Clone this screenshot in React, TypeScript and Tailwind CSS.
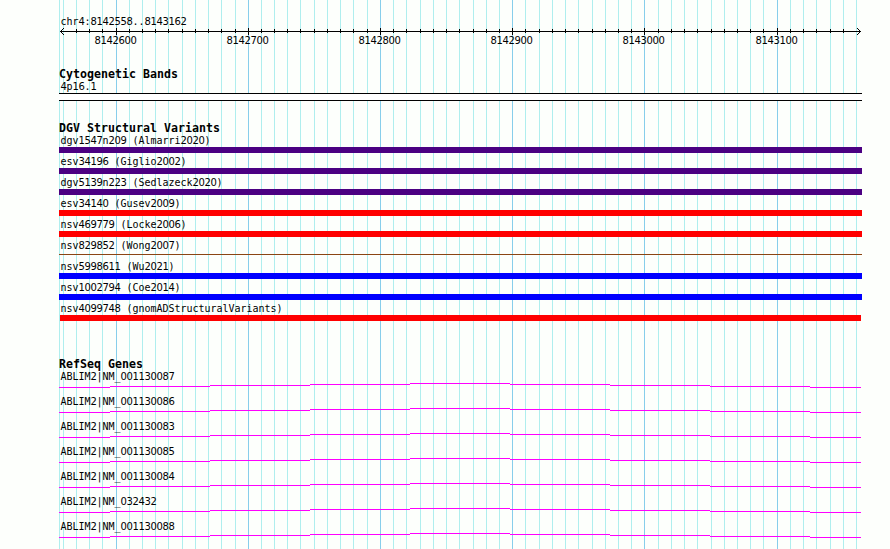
import React from "react";

const minor = [
  59, 63, 76, 89, 102, 129, 142, 155, 168, 182, 195, 208, 221, 235, 261, 274, 287, 300, 314, 327, 340, 353, 367,
  393, 406, 420, 433, 446, 459, 473, 486, 499, 525, 539, 552, 565, 578, 592, 605, 618, 631, 658, 671, 684, 697,
  711, 724, 737, 750, 763, 790, 803, 816, 830, 843, 856,
];

const major = [
  { x: 116, label: "8142600" },
  { x: 248, label: "8142700" },
  { x: 380, label: "8142800" },
  { x: 512, label: "8142900" },
  { x: 644, label: "8143000" },
  { x: 777, label: "8143100" },
];

const variants = [
  { name: "dgv1547n209 (Almarri2020)", bar: "h-1.5 bg-[#4b0082]" },
  { name: "esv34196 (Giglio2002)", bar: "h-1.5 bg-[#4b0082]" },
  { name: "dgv5139n223 (Sedlazeck2020)", bar: "h-1.5 bg-[#4b0082]" },
  { name: "esv34140 (Gusev2009)", bar: "h-1.5 bg-[#ff0000]" },
  { name: "nsv469779 (Locke2006)", bar: "h-1.5 bg-[#ff0000]" },
  { name: "nsv829852 (Wong2007)", bar: "mt-0.5 mb-[3px] h-px bg-[#8b4513]" },
  { name: "nsv5998611 (Wu2021)", bar: "h-1.5 bg-[#0000ff]" },
  { name: "nsv1002794 (Coe2014)", bar: "h-1.5 bg-[#0000ff]" },
  { name: "nsv4099748 (gnomADStructuralVariants)", bar: "mx-px h-1.5 bg-[#ff0000]" },
];

const genes = [
  "ABLIM2|NM_001130087",
  "ABLIM2|NM_001130086",
  "ABLIM2|NM_001130083",
  "ABLIM2|NM_001130085",
  "ABLIM2|NM_001130084",
  "ABLIM2|NM_032432",
  "ABLIM2|NM_001130088",
];

const digits = "font-['DejaVu_Sans',sans-serif] tracking-[-0.362px]";

// Fixed-pitch label whose digits use plain, undotted zeros.
function Label({ text }: { text: string }) {
  return (
    <div className="h-3 whitespace-pre pl-[1.5px] font-['DejaVu_Sans_Mono',monospace] text-[10px] leading-[14px] tracking-[-0.02px] text-black">
      {text.split(/(\d+)/).map((part, i) =>
        /^\d/.test(part) ? (
          <span key={i} className={digits}>
            {part}
          </span>
        ) : (
          part
        ),
      )}
    </div>
  );
}

function Title({ children }: { children: string }) {
  return (
    <h2 className="h-3 whitespace-pre font-['DejaVu_Sans_Mono',monospace] text-[11.6px] font-bold leading-[13px] tracking-[0.016px] text-black">
      {children}
    </h2>
  );
}

function Grid() {
  return (
    <svg className="absolute inset-0" width="890" height="549" shapeRendering="crispEdges">
      {minor.map((x) => (
        <rect key={x} x={x} y="0" width="1" height="549" fill="#afeeee" />
      ))}
      {major.map(({ x }) => (
        <rect key={x} x={x} y="0" width="1" height="549" fill="#87ceeb" />
      ))}
    </svg>
  );
}

function Ruler() {
  return (
    <svg className="block" width="803" height="20" viewBox="59 27 803 20">
      <g shapeRendering="crispEdges">
        <rect x="60" y="31" width="801" height="1" />
        {minor.slice(2, -1).map((x) => (
          <rect key={x} x={x} y="29" width="1" height="4" />
        ))}
        {major.map(({ x }) => (
          <rect key={x} x={x} y="28" width="1" height="7" />
        ))}
        <path d="M61 30h1v3h-1zM62 29h1v1h-1zM62 33h1v1h-1zM63 28h1v1h-1zM63 34h1v1h-1z" />
        <path d="M859 30h1v3h-1zM858 29h1v1h-1zM858 33h1v1h-1zM857 28h1v1h-1zM857 34h1v1h-1z" />
      </g>
      {major.map(({ x, label }) => (
        <text key={x} x={x - 21.5} y="44" className={digits} fontSize="10">
          {label}
        </text>
      ))}
    </svg>
  );
}

function Gene({ name }: { name: string }) {
  return (
    <div className="h-[25px]">
      <Label text={name} />
      <svg className="block" width="803" height="8" viewBox="59 0 803 8" shapeRendering="crispEdges" fill="#ff00ff">
        {[5, 4, 3, 2, 1, 2, 3, 4, 5].map((y, i) => {
          const start = i === 0 ? 59 : 10 + i * 100;
          const end = i === 8 ? 861 : 110 + i * 100;
          return <rect key={i} x={start} y={y} width={end - start} height="1" />;
        })}
      </svg>
    </div>
  );
}

export default function App() {
  return (
    <main className="relative h-[549px] w-[890px] overflow-hidden bg-[#fdfffc]">
      <Grid />
      <div className="relative ml-[59px] flex w-[803px] flex-col pt-[15px]">
        <Label text="chr4:8142558..8143162" />
        <Ruler />
        <section className="mt-[21px]">
          <Title>Cytogenetic Bands</Title>
          <Label text="4p16.1" />
          <div className="mt-px h-2 border-y border-black bg-white" />
        </section>
        <section className="mt-[21px]">
          <Title>DGV Structural Variants</Title>
          {variants.map((v) => (
            <div key={v.name} className="h-[21px]">
              <Label text={v.name} />
              <div className="pt-px">
                <div className={v.bar} />
              </div>
            </div>
          ))}
        </section>
        <section className="mt-[35px]">
          <Title>RefSeq Genes</Title>
          {genes.map((name) => (
            <Gene key={name} name={name} />
          ))}
        </section>
      </div>
    </main>
  );
}
